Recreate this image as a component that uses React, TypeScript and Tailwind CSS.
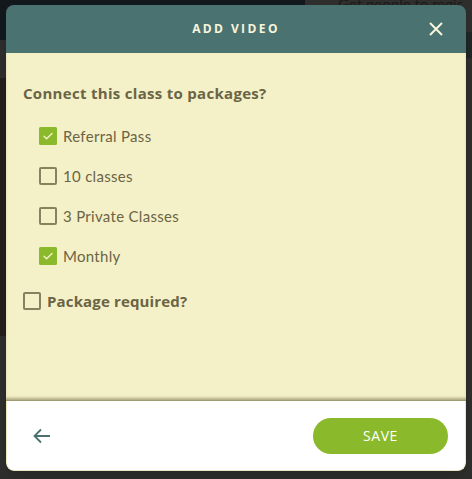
import React from 'react';

const Check = () => (
  <svg viewBox="0 0 18 18" className="w-[18px] h-[18px]">
    <rect width="18" height="18" rx="1.5" fill="#8aba2b" />
    <path d="M5 9.3l2.6 2.5L13 6.4" fill="none" stroke="#f4f1c8" strokeWidth="1.4" strokeLinecap="round" strokeLinejoin="round" />
  </svg>
);

const Box = () => (
  <div className="w-[18px] h-[18px] rounded-[2px] border-2 border-[#8a7f60]" />
);

const packages = [
  { name: 'Referral Pass', on: true },
  { name: '10 classes', on: false },
  { name: '3 Private Classes', on: false },
  { name: 'Monthly', on: true },
];

const App = () => {
  return (
    <div className="relative w-[472px] h-[479px] bg-[#2e2e2c] overflow-hidden font-['Lato',sans-serif]">
      {/* Page behind the overlay */}
      <div className="absolute left-0 top-0 w-[305px] h-[40px] bg-[#13181d]" />
      <div className="absolute left-[338px] top-[-4px] text-[15px] leading-[16px] text-[#1b1b1b]">Get people to regis</div>
      <div className="absolute left-0 top-[78px] w-[40px] h-[258px] bg-[#241e1c]" />
      <div className="absolute left-[440px] top-[32px] w-[32px] h-[26px] bg-[#1e2626]" />

      {/* Modal */}
      <div className="absolute left-[6px] top-[5px] w-[460px] h-[466px] rounded-[8px] overflow-hidden flex flex-col shadow-lg">
        <div className="h-[48px] shrink-0 bg-[#4a7270] flex items-center justify-center relative">
          <span className="text-[12px] font-bold tracking-[0.2em] text-[#f7f5dc] font-['Open_Sans',sans-serif]">ADD VIDEO</span>
          <svg viewBox="0 0 14 14" className="absolute right-[23px] top-[17px] w-[14px] h-[14px]">
            <path d="M1 1l12 12M13 1L1 13" stroke="#f7f5dc" strokeWidth="2" />
          </svg>
        </div>

        <div className="flex-1 bg-[#f4f1c8] px-[17px] pt-[29px] shadow-[inset_0_-3px_3px_-1px_#b1a980] border-b border-[#a39b72]">
          <div className="text-[15px] font-bold text-[#6b6445] tracking-[0.02em] leading-[22px] font-['Open_Sans',sans-serif]">Connect this class to packages?</div>
          <div className="flex flex-col gap-[22px] mt-[23px] pl-[16px]">
            {packages.map((p) => (
              <div key={p.name} className="flex items-center gap-[6px] h-[18px]">
                {p.on ? <Check /> : <Box />}
                <span className="text-[15px] text-[#6b6445] tracking-[0.02em]">{p.name}</span>
              </div>
            ))}
          </div>
          <div className="flex items-center gap-[6px] h-[18px] mt-[27px]">
            <Box />
            <span className="text-[15px] font-bold text-[#6b6445] tracking-[0.01em] font-['Open_Sans',sans-serif]">Package required?</span>
          </div>
        </div>

        <div className="h-[70px] shrink-0 bg-white flex items-center justify-between pl-[26px] pr-[17px] border-b border-x border-[#ece8c4] rounded-b-[8px]">
          <svg viewBox="0 0 18 16" className="w-[18px] h-[16px]">
            <path d="M17 8H2M8 1.5L1.5 8 8 14.5" fill="none" stroke="#4a7270" strokeWidth="1.8" />
          </svg>
          <button className="w-[135px] h-[36px] rounded-full bg-[#8aba2b] text-white text-[14px] font-medium tracking-[0.04em] font-['Open_Sans',sans-serif]">
            SAVE
          </button>
        </div>
      </div>
    </div>
  );
};

export default App;
